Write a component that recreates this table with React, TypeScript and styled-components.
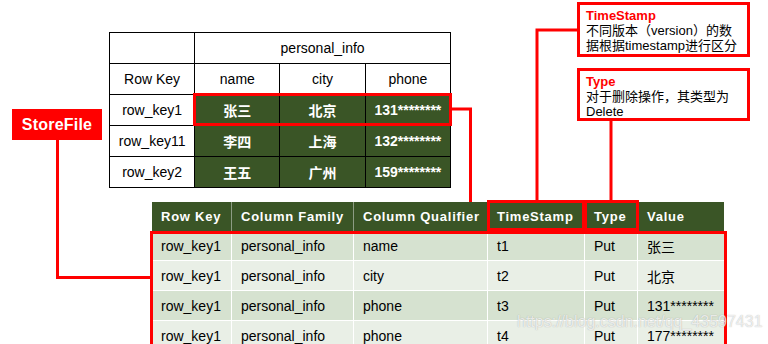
import React from "react";
import styled, { createGlobalStyle } from "styled-components";

const GlobalStyle = createGlobalStyle`
  html, body { margin: 0; padding: 0; background: #fff; }
`;

const FONT = `"Liberation Sans", Arial, "Noto Sans CJK SC", sans-serif`;
const GREEN = "#3A5526";
const RED = "#FF0000";

const Canvas = styled.div`
  position: relative;
  width: 768px;
  height: 344px;
  overflow: hidden;
  background: #fff;
  font-family: ${FONT};
  color: #000;
`;

/* ---------- upper (logical) table: a diagram node ---------- */
const MatrixNode = styled.div`
  position: absolute;
  left: 109px;
  top: 32px;
`;

const MatrixTable = styled.table`
  border-collapse: collapse;
  table-layout: fixed;
  width: 342px;
`;

const MatrixCol = styled.col`
  width: 85px;
`;

const MatrixCell = styled.td<{ $dark?: boolean }>`
  height: 30px;
  padding: 0;
  border: 1px solid #000;
  text-align: center;
  vertical-align: middle;
  font-size: 14px;
  white-space: nowrap;
  background: ${(p) => (p.$dark ? GREEN : "#fff")};
  color: ${(p) => (p.$dark ? "#fff" : "#000")};
  font-weight: ${(p) => (p.$dark ? "bold" : "normal")};
`;

/* red outline over the first data row of the upper table */
const RowHighlight = styled.div`
  position: absolute;
  left: 84px;
  top: 61px;
  width: 259px;
  height: 33px;
  box-sizing: border-box;
  border: 3px solid ${RED};
  pointer-events: none;
`;

/* ---------- lower (physical) table: a diagram node ---------- */
const LogTable = styled.div`
  position: absolute;
  left: 152px;
  top: 202px;
  width: 572px;
  display: flex;
  flex-direction: column;
`;

const COLS = "80px 122px 134px 97px 53px 86px";

const HeadRow = styled.div`
  display: grid;
  grid-template-columns: ${COLS};
`;

const HeadCell = styled.div<{ $last?: boolean; $mark?: "left" | "right" }>`
  position: relative;
  box-sizing: border-box;
  height: 29px;
  display: flex;
  align-items: center;
  padding-left: 9px;
  background: ${GREEN};
  color: #fff;
  font-size: 13px;
  font-weight: bold;
  letter-spacing: 0.75px;
  white-space: nowrap;
  border-right: ${(p) => (p.$last ? "none" : "1px solid #8d9c83")};

  &::after {
    content: "";
    display: ${(p) => (p.$mark ? "block" : "none")};
    position: absolute;
    top: -2px;
    bottom: 0;
    left: -1px;
    right: ${(p) => (p.$mark === "right" ? "-2px" : "-1px")};
    border: 3px solid ${RED};
    z-index: 2;
  }
`;

const Body = styled.div`
  position: relative;
  display: grid;
  grid-template-columns: ${COLS};

  &::after {
    content: "";
    position: absolute;
    top: 0;
    left: -2px;
    right: -3px;
    height: 200px;
    border: 3px solid ${RED};
    pointer-events: none;
  }
`;

const BodyCell = styled.div<{ $alt?: boolean; $last?: boolean }>`
  box-sizing: border-box;
  height: 30px;
  display: flex;
  align-items: center;
  padding-left: 9px;
  background: ${(p) => (p.$alt ? "#E9EFE6" : "#D6E2D0")};
  font-size: 14px;
  white-space: nowrap;
  border-bottom: 1px solid #fff;
  border-right: ${(p) => (p.$last ? "none" : "1px solid #fff")};
`;

/* ---------- annotations ---------- */
const Connectors = styled.svg`
  position: absolute;
  left: 0;
  top: 0;
  pointer-events: none;
`;

const Tag = styled.div`
  position: absolute;
  left: 12px;
  top: 109px;
  width: 90px;
  height: 31px;
  display: flex;
  align-items: center;
  justify-content: center;
  background: ${RED};
  color: #fff;
  font-size: 16px;
  font-weight: bold;
  letter-spacing: 0.2px;
`;

const CalloutStack = styled.div`
  position: absolute;
  left: 577px;
  top: 2px;
  width: 173px;
  display: flex;
  flex-direction: column;
  gap: 11px;
`;

const Callout = styled.div<{ $h: number }>`
  height: ${(p) => p.$h}px;
  box-sizing: border-box;
  border: 3px solid ${RED};
  background: #fff;
  padding: 3px 6px 0;
  font-size: 13px;
  line-height: 15px;
  white-space: nowrap;
`;

const CalloutTitle = styled.div`
  color: ${RED};
  font-weight: bold;
`;

const Watermark = styled.div`
  position: absolute;
  left: 517px;
  top: 313px;
  font-size: 16px;
  color: rgba(255, 255, 255, 0.75);
  text-shadow: 0 0 1px rgba(110, 110, 110, 0.55);
  pointer-events: none;
  white-space: nowrap;
`;

const matrixRows = [
  { key: "row_key1", name: "张三", city: "北京", phone: "131********" },
  { key: "row_key11", name: "李四", city: "上海", phone: "132********" },
  { key: "row_key2", name: "王五", city: "广州", phone: "159********" },
];

const headers: { label: string; mark?: "left" | "right" }[] = [
  { label: "Row Key" },
  { label: "Column Family" },
  { label: "Column Qualifier" },
  { label: "TimeStamp", mark: "left" },
  { label: "Type", mark: "right" },
  { label: "Value" },
];

const cells = [
  ["row_key1", "personal_info", "name", "t1", "Put", "张三"],
  ["row_key1", "personal_info", "city", "t2", "Put", "北京"],
  ["row_key1", "personal_info", "phone", "t3", "Put", "131********"],
  ["row_key1", "personal_info", "phone", "t4", "Put", "177********"],
];

export default function App() {
  return (
    <Canvas>
      <GlobalStyle />

      <MatrixNode>
        <MatrixTable>
          <colgroup>
            <MatrixCol />
            <MatrixCol />
            <MatrixCol />
            <MatrixCol />
          </colgroup>
          <tbody>
            <tr>
              <MatrixCell />
              <MatrixCell colSpan={3}>personal_info</MatrixCell>
            </tr>
            <tr>
              <MatrixCell>Row Key</MatrixCell>
              <MatrixCell>name</MatrixCell>
              <MatrixCell>city</MatrixCell>
              <MatrixCell>phone</MatrixCell>
            </tr>
            {matrixRows.map((r) => (
              <tr key={r.key}>
                <MatrixCell>{r.key}</MatrixCell>
                <MatrixCell $dark>{r.name}</MatrixCell>
                <MatrixCell $dark>{r.city}</MatrixCell>
                <MatrixCell $dark>{r.phone}</MatrixCell>
              </tr>
            ))}
          </tbody>
        </MatrixTable>
        <RowHighlight />
      </MatrixNode>

      <LogTable>
        <HeadRow>
          {headers.map((h, i) => (
            <HeadCell key={h.label} $last={i === headers.length - 1} $mark={h.mark}>
              {h.label}
            </HeadCell>
          ))}
        </HeadRow>
        <Body>
          {cells.map((row, ri) =>
            row.map((c, ci) => (
              <BodyCell key={`${ri}-${ci}`} $alt={ri % 2 === 1} $last={ci === row.length - 1}>
                {c}
              </BodyCell>
            ))
          )}
        </Body>
      </LogTable>

      <Tag>StoreFile</Tag>

      <CalloutStack>
        <Callout $h={55}>
          <CalloutTitle>TimeStamp</CalloutTitle>
          <div>不同版本（version）的数</div>
          <div>据根据timestamp进行区分</div>
        </Callout>
        <Callout $h={53}>
          <CalloutTitle>Type</CalloutTitle>
          <div>对于删除操作，其类型为</div>
          <div>Delete</div>
        </Callout>
      </CalloutStack>

      <Connectors width={768} height={344} viewBox="0 0 768 344">
        <g fill="none" stroke={RED} strokeWidth={3} strokeLinejoin="miter">
          <polyline points="57.5,140 57.5,277.5 151,277.5" />
          <polyline points="451,109 470.5,109 470.5,202" />
          <polyline points="578,30 537,30 537,201" />
          <polyline points="611,121 611,201" />
        </g>
      </Connectors>

      <Watermark>https://blog.csdn.net/qq_43597431</Watermark>
    </Canvas>
  );
}
